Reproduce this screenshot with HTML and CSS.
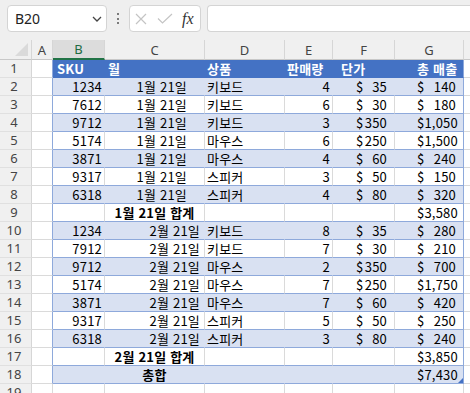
FILE: index.html
```html
<!DOCTYPE html>
<html lang="ko">
	<head>
		<meta charset="utf-8">
		<title>매출 합계</title>
		<link rel="stylesheet" href="styles.css">
	</head>
	<body>
		<div class="bar">
			<div class="namebox">
				<span>B20</span>
				<svg width="10" height="6" viewBox="0 0 10 6"><path d="M1 1l4 4 4-4" fill="none" stroke="#444" stroke-width="1.3"/></svg>
			</div>
			<div class="more"><i></i><i></i><i></i></div>
			<div class="fxbox">
				<svg width="12" height="12" viewBox="0 0 12 12"><path d="M1 1L11 11M11 1L1 11" stroke="#c4c4c4" stroke-width="1.2"/></svg>
				<svg width="16" height="11" viewBox="0 0 16 11"><path d="M1 5.5L5.5 10L15 1" fill="none" stroke="#c4c4c4" stroke-width="1.2"/></svg>
				<span class="fx">fx</span>
			</div>
			<div class="input"></div>
		</div>

		<table class="sheet">
			<colgroup>
				<col class="c-rh"><col class="c-a"><col class="c-b"><col class="c-c"><col class="c-d">
				<col class="c-e"><col class="c-f"><col class="c-g"><col class="c-h">
			</colgroup>
			<thead>
				<tr>
					<th class="corner"><span class="tri"></span></th>
					<th>A</th><th class="sel">B</th><th>C</th><th>D</th><th>E</th><th>F</th><th>G</th><th></th>
				</tr>
			</thead>
			<tbody>
				<tr class="t hd">
					<th>1</th><td class="a"></td>
					<td class="sku">SKU</td><td class="mon">월</td><td class="txt">상품</td><td class="txt">판매량</td><td class="dan">단가</td><td class="g tot">총 매출</td>
					<td class="h"></td>
				</tr>
				<tr class="t band">
					<th>2</th><td class="a"></td>
					<td class="num">1234</td><td class="d1">1월 21일</td><td class="txt">키보드</td><td class="num">4</td>
					<td class="f"><span class="cur">$</span>35</td><td class="g"><span class="cur">$</span>140</td><td class="h"></td>
				</tr>
				<tr class="t">
					<th>3</th><td class="a"></td>
					<td class="num">7612</td><td class="d1">1월 21일</td><td class="txt">키보드</td><td class="num">6</td>
					<td class="f"><span class="cur">$</span>30</td><td class="g"><span class="cur">$</span>180</td><td class="h"></td>
				</tr>
				<tr class="t band">
					<th>4</th><td class="a"></td>
					<td class="num">9712</td><td class="d1">1월 21일</td><td class="txt">키보드</td><td class="num">3</td>
					<td class="f"><span class="cur">$</span>350</td><td class="g"><span class="cur">$</span>1,050</td><td class="h"></td>
				</tr>
				<tr class="t">
					<th>5</th><td class="a"></td>
					<td class="num">5174</td><td class="d1">1월 21일</td><td class="txt">마우스</td><td class="num">6</td>
					<td class="f"><span class="cur">$</span>250</td><td class="g"><span class="cur">$</span>1,500</td><td class="h"></td>
				</tr>
				<tr class="t band">
					<th>6</th><td class="a"></td>
					<td class="num">3871</td><td class="d1">1월 21일</td><td class="txt">마우스</td><td class="num">4</td>
					<td class="f"><span class="cur">$</span>60</td><td class="g"><span class="cur">$</span>240</td><td class="h"></td>
				</tr>
				<tr class="t">
					<th>7</th><td class="a"></td>
					<td class="num">9317</td><td class="d1">1월 21일</td><td class="txt">스피커</td><td class="num">3</td>
					<td class="f"><span class="cur">$</span>50</td><td class="g"><span class="cur">$</span>150</td><td class="h"></td>
				</tr>
				<tr class="t band">
					<th>8</th><td class="a"></td>
					<td class="num">6318</td><td class="d1">1월 21일</td><td class="txt">스피커</td><td class="num">4</td>
					<td class="f"><span class="cur">$</span>80</td><td class="g"><span class="cur">$</span>320</td><td class="h"></td>
				</tr>
				<tr class="t">
					<th>9</th><td class="a"></td>
					<td></td><td class="sum">1월 21일 합계</td><td></td><td></td>
					<td></td><td class="g"><span class="cur">$</span>3,580</td><td class="h"></td>
				</tr>
				<tr class="t band">
					<th>10</th><td class="a"></td>
					<td class="num">1234</td><td class="d2">2월 21일</td><td class="txt">키보드</td><td class="num">8</td>
					<td class="f"><span class="cur">$</span>35</td><td class="g"><span class="cur">$</span>280</td><td class="h"></td>
				</tr>
				<tr class="t">
					<th>11</th><td class="a"></td>
					<td class="num">7912</td><td class="d2">2월 21일</td><td class="txt">키보드</td><td class="num">7</td>
					<td class="f"><span class="cur">$</span>30</td><td class="g"><span class="cur">$</span>210</td><td class="h"></td>
				</tr>
				<tr class="t band">
					<th>12</th><td class="a"></td>
					<td class="num">9712</td><td class="d2">2월 21일</td><td class="txt">마우스</td><td class="num">2</td>
					<td class="f"><span class="cur">$</span>350</td><td class="g"><span class="cur">$</span>700</td><td class="h"></td>
				</tr>
				<tr class="t">
					<th>13</th><td class="a"></td>
					<td class="num">5174</td><td class="d2">2월 21일</td><td class="txt">마우스</td><td class="num">7</td>
					<td class="f"><span class="cur">$</span>250</td><td class="g"><span class="cur">$</span>1,750</td><td class="h"></td>
				</tr>
				<tr class="t band">
					<th>14</th><td class="a"></td>
					<td class="num">3871</td><td class="d2">2월 21일</td><td class="txt">마우스</td><td class="num">7</td>
					<td class="f"><span class="cur">$</span>60</td><td class="g"><span class="cur">$</span>420</td><td class="h"></td>
				</tr>
				<tr class="t">
					<th>15</th><td class="a"></td>
					<td class="num">9317</td><td class="d2">2월 21일</td><td class="txt">스피커</td><td class="num">5</td>
					<td class="f"><span class="cur">$</span>50</td><td class="g"><span class="cur">$</span>250</td><td class="h"></td>
				</tr>
				<tr class="t band">
					<th>16</th><td class="a"></td>
					<td class="num">6318</td><td class="d2">2월 21일</td><td class="txt">스피커</td><td class="num">3</td>
					<td class="f"><span class="cur">$</span>80</td><td class="g"><span class="cur">$</span>240</td><td class="h"></td>
				</tr>
				<tr class="t">
					<th>17</th><td class="a"></td>
					<td></td><td class="sum">2월 21일 합계</td><td></td><td></td>
					<td></td><td class="g"><span class="cur">$</span>3,850</td><td class="h"></td>
				</tr>
				<tr class="t band">
					<th>18</th><td class="a"></td>
					<td></td><td class="sum">총합</td><td></td><td></td>
					<td></td><td class="g last"><span class="cur">$</span>7,430<span class="grip"></span></td><td class="h"></td>
				</tr>
				<tr>
					<th>19</th><td></td><td></td><td></td><td></td><td></td><td></td><td></td><td></td>
				</tr>
			</tbody>
		</table>
	</body>
</html>
```

FILE: styles.css
```css
*{margin: 0; padding: 0; box-sizing: border-box;}
body{width: 470px; height: 393px; overflow: hidden; background: #fff; font-family: "Noto Sans CJK KR", "Noto Sans", sans-serif; font-size: 13px; color: #000;}

/* formula bar */
.bar{display: flex; align-items: flex-start; height: 40px; padding: 5px 0 0 7px; background: #efefef;}
.namebox{display: flex; align-items: center; justify-content: space-between; width: 100px; height: 27px; padding: 0 4px 0 7px; background: #fff; border: 1px solid #d4d4d4; border-radius: 4px; font-family: "Noto Sans", sans-serif; font-size: 14px; color: #222;}
.more{display: flex; flex-direction: column; align-items: center; justify-content: center; gap: 2.5px; width: 22px; height: 27px;}
.more i{display: block; width: 2px; height: 2px; background: #555; border-radius: 50%;}
.fxbox{display: flex; align-items: center; width: 72px; height: 27px; padding-left: 5px; background: #fff; border: 1px solid #d4d4d4; border-radius: 4px;}
.fxbox svg + svg{margin-left: 10px;}
.fx{margin-left: 9px; font-family: "Liberation Serif", serif; font-style: italic; font-size: 16px; color: #333;}
.input{flex: 1; height: 27px; margin-left: 6px; background: #fff; border: 1px solid #d4d4d4; border-right: none; border-radius: 4px 0 0 4px;}

/* grid */
.sheet{border-collapse: separate; border-spacing: 0; table-layout: fixed; width: 480px;}
.c-rh{width: 32px;}
.c-a{width: 21px;}
.c-b{width: 52px;}
.c-c{width: 100px;}
.c-d{width: 80px;}
.c-e{width: 48px;}
.c-f{width: 62px;}
.c-g{width: 69px;}
.c-h{width: 16px;}

thead th{height: 20px; background: #f0f0f0; font-family: "Noto Sans", sans-serif; font-weight: normal; font-size: 13px; color: #444; line-height: 18px; border-right: 1px solid #d6d6d6; border-bottom: 1px solid #c8c8c8;}
thead th.sel{background: #dcdcdc; color: #1e6b41; border-bottom: 2px solid #217346;}
.corner{position: relative;}
.tri{position: absolute; right: 3px; bottom: 3px; width: 0; height: 0; border-left: 13px solid transparent; border-bottom: 13px solid #dadada;}

tbody th{height: 18px; padding-right: 3px; background: #f0f0f0; font-family: "Noto Sans", sans-serif; font-weight: normal; font-size: 13px; color: #444; line-height: 17px; text-align: center; border-right: 1px solid #d6d6d6; border-bottom: 1px solid #e0e0e0;}

td{height: 18px; padding: 0 2px; letter-spacing: 0.2px; line-height: 17px; white-space: nowrap; overflow: hidden; border-right: 1px solid #dadada; border-bottom: 1px solid #dadada;}

/* table region */
.t td{border-bottom-color: #8ea9db;}
.t td.a{border-right-color: #8ea9db; border-bottom-color: #dadada; background: #fff;}
.t td.h{border-bottom-color: #dadada; background: #fff;}
.t td.g{border-right-color: #8ea9db;}
.band td{background: #d9e1f2; border-right-color: transparent;}
.hd td{background: #4472c4; color: #fff; font-weight: bold; border-right-color: transparent; border-bottom-color: #4472c4;}

.sku{padding-left: 4px;}
.mon{padding-left: 3px;}
.dan{padding-left: 8px;}
.tot{text-align: right; padding-right: 7px;}
.num{text-align: right;}
.d1{text-align: right; padding-right: 17px;}
.d2{text-align: right; padding-right: 4px;}
.sum{text-align: center; font-weight: bold;}
.f{text-align: right; padding: 0 7px 0 23px;}
.g{text-align: right; padding: 0 7px 0 22px;}
.cur{float: left;}
.last{position: relative;}
.grip{position: absolute; right: 0; bottom: 0; width: 0; height: 0; border-left: 5px solid transparent; border-bottom: 5px solid #4472c4;}
```
